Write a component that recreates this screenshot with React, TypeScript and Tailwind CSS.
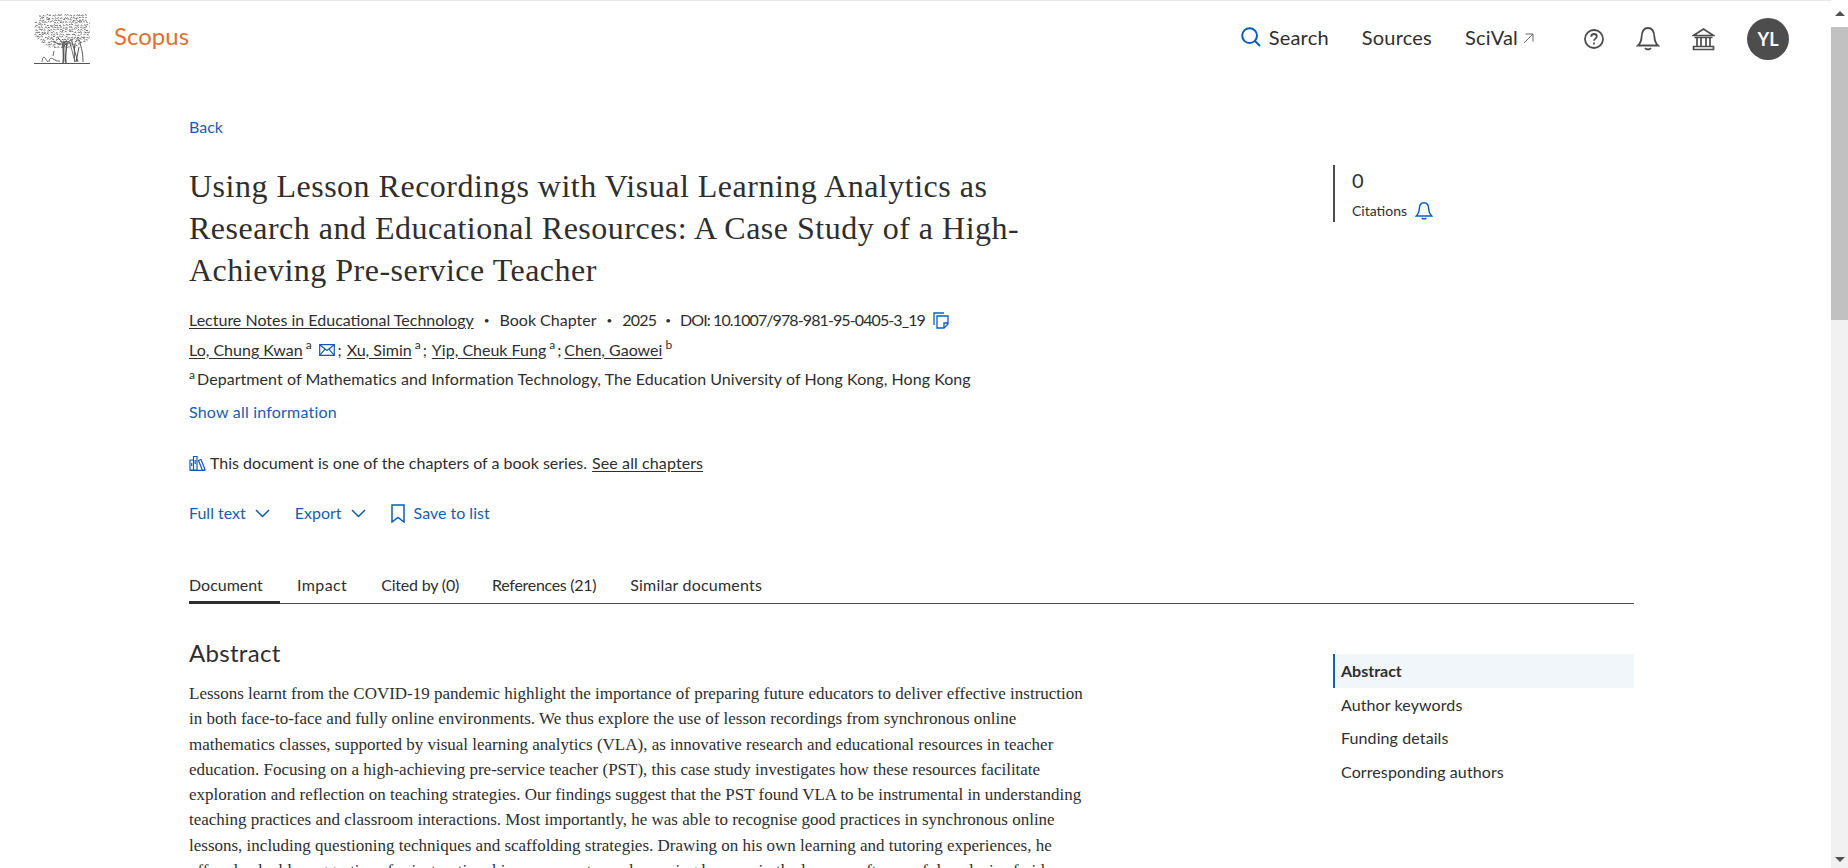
const sans = "font-['Lato','Noto_Sans',sans-serif]"
const serif = "font-['Liberation_Serif',serif]"

// small seeded scribble for the tree crown of the logo
function crownPaths() {
  const out: string[] = []
  let seed = 7
  const rnd = () => {
    seed = (seed * 16807) % 2147483647
    return seed / 2147483647
  }
  for (let y = 1; y < 33; y += 2.4) {
    const half = y < 6 ? 23 : y < 24 ? 27.5 : 27 - (y - 24) * 1.6
    for (let x = 28 - half; x < 28 + half; x += 3) {
      const px = x + rnd() * 1.5
      const py = y + rnd() * 1.5
      out.push(`M${px.toFixed(1)} ${py.toFixed(1)}q${(rnd() * 2).toFixed(1)} ${(-1 - rnd()).toFixed(1)} ${(1.5 + rnd()).toFixed(1)} ${(rnd() - 0.4).toFixed(1)}`)
    }
  }
  return out.join('')
}

function TreeLogo() {
  return (
    <svg width="56" height="50" viewBox="0 0 56 50" fill="none" stroke="#555" className="shrink-0">
      <path d={crownPaths()} strokeWidth="1" opacity="0.85" />
      <path d="M28 34c1-4 0-7-4-10M27 30c-3 0-5-1-8-3M30 32c2-3 5-5 9-7" strokeWidth="1" />
      <path d="M29 49c1-6 0-12 0-20l4-2M32 49c-1-6 0-13 1-20" strokeWidth="1.4" />
      <path d="M30 48V30l6-1 5 19" strokeWidth="0.8" />
      <path d="M42 27c2-2 4-1 4 1 0 3 3 8 3 20M41 30c-1 5-1 12 0 18M45 33l-3 15M38 28l6 20" strokeWidth="1" />
      <path d="M15 48c0-3 2-5 4-3l4 2h3M8 48c0-2 1-5 2-5s2 3 4 5M19 42l1-5" strokeWidth="0.9" />
      <path d="M0 49.5h56" strokeWidth="1" />
    </svg>
  )
}

function SearchIcon() {
  return (
    <svg width="20" height="20" viewBox="0 0 20 20" fill="none" stroke="#0b5cb8" strokeWidth="2">
      <circle cx="8.6" cy="8.6" r="7.4" />
      <path d="M14 14l5 5" />
    </svg>
  )
}

function ArrowOut() {
  return (
    <svg width="11" height="11" viewBox="0 0 11 11" fill="none" stroke="#666" strokeWidth="1">
      <path d="M2.5 1h7.5v7.5M10 1L1 10" />
    </svg>
  )
}

function HelpIcon() {
  return (
    <svg width="20" height="20" viewBox="0 0 20 20" fill="none" stroke="#4d4d4d" strokeWidth="1.8">
      <circle cx="10" cy="10" r="9" />
      <path d="M7.2 7.7c0-1.7 1.2-2.7 2.8-2.7s2.8 1 2.8 2.4c0 2.2-2.8 2.2-2.8 4.4" />
      <path d="M10 13.6v1.8" />
    </svg>
  )
}

function BellIcon({ size, color, sw }: { size: number; color: string; sw: number }) {
  return (
    <svg width={size} height={size} viewBox="0 0 22 24" fill="none" stroke={color} strokeWidth={sw}>
      <path d="M1 18.5h20c-2.6-2.4-3.4-5-3.6-8.6C17.2 5 15.4 1 11 1S4.800 5 4.600 9.900C4.400 13.500 3.600 16.100 1 18.500Z" />
      <path d="M8 21.200c1.600 1.700 4.400 1.700 6 0" />
    </svg>
  )
}

function BankIcon() {
  return (
    <svg width="23" height="23" viewBox="0 0 23 23" fill="none" stroke="#4d4d4d" strokeWidth="1.7">
      <path d="M1.500 7.500L11.500 1l10 6.500zM2.500 9.500h18M1.500 18.500h20v3h-20z" />
      <path d="M5 10v8M9 10v8M14 10v8M18 10v8" />
    </svg>
  )
}

function CopyIcon() {
  return (
    <svg width="16" height="17" viewBox="0 0 16 17" fill="none" stroke="#0b5cb8" strokeWidth="1.300">
      <path d="M1 13V1h10" />
      <path d="M4 4h11v8l-4 4H4z" />
      <path d="M15 11h-4v5" />
    </svg>
  )
}

function MailIcon() {
  return (
    <svg width="16" height="12" viewBox="0 0 16 12" fill="none" stroke="#0b5cb8" strokeWidth="1.200">
      <path d="M.7.7h14.600v10.600H.7z" />
      <path d="M.7.7L8 6.500 15.300.7M.7 11.300L6 5.200M15.300 11.300L10 5.200" />
    </svg>
  )
}

function BooksIcon() {
  return (
    <svg width="17" height="16" viewBox="0 0 17 16" fill="none" stroke="#0b5cb8" strokeWidth="1.200">
      <path d="M.7 15.300h15.600M1 5h3.500v10H1zM4.500 1.500H8V15H4.500zM9.500 5.500L12 4.500l4 10-2.500 1z" />
      <path d="M2.700 8v3M6.200 5v4" />
    </svg>
  )
}

function Chevron() {
  return (
    <svg width="15" height="9" viewBox="0 0 15 9" fill="none" stroke="#0b5cb8" strokeWidth="1.500">
      <path d="M1 1l6.500 6.500L14 1" />
    </svg>
  )
}

function BookmarkIcon() {
  return (
    <svg width="14" height="19" viewBox="0 0 14 19" fill="none" stroke="#0b5cb8" strokeWidth="1.500">
      <path d="M1 1h12v17l-6-4.500L1 18z" />
    </svg>
  )
}

function Sup({ children }: { children: string }) {
  return <span className="relative top-[-5px] ml-[3px] mr-[2px] text-[12px] leading-none">{children}</span>
}

function Author({ children }: { children: string }) {
  return <a className="underline underline-offset-2">{children}</a>
}

function Dot() {
  return <span className="mx-[10px] text-[10px]">•</span>
}

const tabs = [
  { label: 'Document', className: 'mb-[-1px] mr-[17px] w-[91px] border-b-[3px] border-[#2e2e2e]' },
  { label: 'Impact', className: 'mr-[34px] tracking-[0.4px]' },
  { label: 'Cited by (0)', className: 'mr-[33px] tracking-[-0.2px]' },
  { label: 'References (21)', className: 'mr-[34px] tracking-[-0.3px]' },
  { label: 'Similar documents', className: 'tracking-[0.2px]' },
]
const outline = ['Abstract', 'Author keywords', 'Funding details', 'Corresponding authors']

const abstractLines = [
  'Lessons learnt from the COVID-19 pandemic highlight the importance of preparing future educators to deliver effective instruction',
  'in both face-to-face and fully online environments. We thus explore the use of lesson recordings from synchronous online',
  'mathematics classes, supported by visual learning analytics (VLA), as innovative research and educational resources in teacher',
  'education. Focusing on a high-achieving pre-service teacher (PST), this case study investigates how these resources facilitate',
  'exploration and reflection on teaching strategies. Our findings suggest that the PST found VLA to be instrumental in understanding',
  'teaching practices and classroom interactions. Most importantly, he was able to recognise good practices in synchronous online',
  'lessons, including questioning techniques and scaffolding strategies. Drawing on his own learning and tutoring experiences, he',
  'offered valuable suggestions for instructional improvements, such as using humour in the lessons, after careful analysis of videos',
]

export default function App() {
  return (
    <div className={`flex h-[868px] overflow-hidden bg-white text-[#2e2e2e] ${sans}`}>
      <div className="min-w-0 flex-1 overflow-hidden border-t border-[#e8e8e8]">
        <header className="flex h-[76px] items-center pl-[34px] pr-[42px]">
          <TreeLogo />
          <span className="mb-[7px] ml-[24px] text-[24px] text-[#e36f2e]">Scopus</span>
          <nav className="mb-[4px] ml-auto flex items-center text-[20px] tracking-[0.2px]">
            <SearchIcon />
            <span className="ml-[8px]">Search</span>
            <span className="ml-[33px]">Sources</span>
            <span className="ml-[33px]">SciVal</span>
            <span className="ml-[5px] mt-[3px]"><ArrowOut /></span>
          </nav>
          <div className="ml-[50px] flex items-center">
            <HelpIcon />
            <span className="ml-[32px]"><BellIcon size={24} color="#4d4d4d" sw={1.8} /></span>
            <span className="ml-[32px]"><BankIcon /></span>
            <span className="ml-[32px] flex h-[42px] w-[42px] items-center justify-center rounded-full bg-[#4d4d4d] text-[18px] font-bold text-white">YL</span>
          </div>
        </header>

        <main className="pl-[189px] pr-[197px]">
          <a className="mt-[38px] block text-[16px] leading-[24px] text-[#1a5cab]">Back</a>

          <div className="mt-[26px] flex">
            <div className="w-[1144px] shrink-0">
              <h1 className={`text-[32px] leading-[42px] tracking-[0.5px] text-[#2e2e2e] ${serif}`}>
                Using Lesson Recordings with Visual Learning Analytics as<br />
                Research and Educational Resources: A Case Study of a High-<br />
                Achieving Pre-service Teacher
              </h1>

              <div className="mt-[14px] flex h-[30px] items-center text-[16px]">
                <a className="underline underline-offset-2">Lecture Notes in Educational Technology</a>
                <Dot />
                <span>Book Chapter</span>
                <Dot />
                <span className="tracking-[-0.8px]">2025</span>
                <span className="mx-[9px] text-[10px]">•</span>
                <span className="tracking-[-0.9px]">DOI: 10.1007/978-981-95-0405-3_19</span>
                <span className="ml-[8px]"><CopyIcon /></span>
              </div>
              <div className="flex h-[29px] items-center text-[16px]">
                <Author>Lo, Chung Kwan</Author><Sup>a</Sup>
                <span className="ml-[5px]"><MailIcon /></span>
                <span className="ml-[3px] mr-[5px]">;</span>
                <Author>Xu, Simin</Author><Sup>a</Sup>
                <span className="mr-[5px]">;</span>
                <Author>Yip, Cheuk Fung</Author><Sup>a</Sup>
                <span className="mr-[3px]">;</span>
                <Author>Chen, Gaowei</Author><Sup>b</Sup>
              </div>
              <div className="flex h-[30px] items-center text-[16px] tracking-[0.06px]">
                <span className="relative top-[-4px] mr-[2px] text-[12px] leading-none">a</span>
                Department of Mathematics and Information Technology, The Education University of Hong Kong, Hong Kong
              </div>
              <a className="mt-[8px] block text-[16px] leading-[20px] tracking-[0.2px] text-[#1a5cab]">Show all information</a>

              <div className="mt-[31px] flex h-[20px] items-center text-[16px]">
                <BooksIcon />
                <span className="ml-[4px]">This document is one of the chapters of a book series.</span>
                <a className="ml-[5px] tracking-[0.1px] underline underline-offset-2">See all chapters</a>
              </div>

              <div className="mt-[30px] flex h-[20px] items-center text-[16px] text-[#1a5cab]">
                <span>Full text</span>
                <span className="ml-[9px]"><Chevron /></span>
                <span className="ml-[25px]">Export</span>
                <span className="ml-[9px]"><Chevron /></span>
                <span className="ml-[25px]"><BookmarkIcon /></span>
                <span className="ml-[9px]">Save to list</span>
              </div>
            </div>

            <aside className="flex h-[57px] flex-col border-l-2 border-[#4d4d4d] pl-[17px]">
              <span className="mt-[3px] text-[20px] leading-[24px]">0</span>
              <span className="mt-[10px] flex items-center text-[14px] leading-[16px]">
                Citations
                <span className="ml-[8px]"><BellIcon size={18} color="#0b5cb8" sw={2} /></span>
              </span>
            </aside>
          </div>

          <nav className="mt-[50px] flex border-b border-[#4d4d4d] text-[16px]">
            {tabs.map((tab) => (
              <span key={tab.label} className={`pb-[4px] leading-[24px] ${tab.className}`}>
                {tab.label}
              </span>
            ))}
          </nav>

          <div className="mt-[33px] flex">
            <section className="w-[1144px] shrink-0">
              <h2 className="text-[24px] leading-[32px] tracking-[0.3px]">Abstract</h2>
              <p className={`mt-[12px] whitespace-nowrap text-[17px] leading-[25.3px] ${serif}`}>
                {abstractLines.map((line) => (
                  <span key={line} className="block">{line}</span>
                ))}
              </p>
            </section>
            <ul className="mt-[17px] w-[301px] shrink-0 text-[16px]">
              {outline.map((item, i) => (
                <li
                  key={item}
                  className={
                    i === 0
                      ? 'flex h-[33.7px] items-center border-l-2 border-[#1b5fa8] bg-[#f1f6fa] pl-[6px] font-bold'
                      : 'flex h-[33.7px] items-center pl-[8px] tracking-[0.1px]'
                  }
                >
                  {item}
                </li>
              ))}
            </ul>
          </div>
        </main>
      </div>

      <div className="flex w-[17px] shrink-0 flex-col bg-[#f1f1f1]">
        <div className="flex h-[27px] items-center justify-center bg-white">
          <span className="h-0 w-0 border-x-[5px] border-b-[5px] border-x-transparent border-b-[#505050]" />
        </div>
        <div className="h-[293px] bg-[#c1c1c1]" />
        <div className="mt-auto flex h-[17px] items-center justify-center">
          <span className="h-0 w-0 border-x-[5px] border-t-[5px] border-x-transparent border-t-[#505050]" />
        </div>
      </div>
    </div>
  )
}
